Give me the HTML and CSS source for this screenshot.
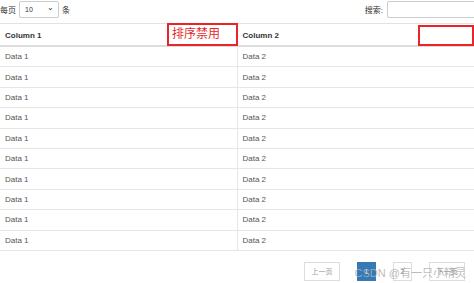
FILE: index.html
```html
<!DOCTYPE html>
<html>
<head>
  <title>DataTables</title>
  <link rel="stylesheet" href="styles.css">
</head>
<body>
  <div class="toolbar">
    <label class="length">每页
      <span class="select">10 <span class="caret">&#8964;</span></span>
      条</label>
    <label class="search">搜索:
      <span class="search-input"></span>
    </label>
  </div>

  <div class="table-wrap">
    <table class="grid">
      <thead>
        <tr><th>Column 1</th><th>Column 2</th></tr>
      </thead>
      <tbody>
        <tr><td>Data 1</td><td>Data 2</td></tr>
        <tr><td>Data 1</td><td>Data 2</td></tr>
        <tr><td>Data 1</td><td>Data 2</td></tr>
        <tr><td>Data 1</td><td>Data 2</td></tr>
        <tr><td>Data 1</td><td>Data 2</td></tr>
        <tr><td>Data 1</td><td>Data 2</td></tr>
        <tr><td>Data 1</td><td>Data 2</td></tr>
        <tr><td>Data 1</td><td>Data 2</td></tr>
        <tr><td>Data 1</td><td>Data 2</td></tr>
        <tr><td>Data 1</td><td>Data 2</td></tr>
      </tbody>
    </table>
    <!-- annotations -->
    <div class="mark mark-left">排序禁用</div>
    <div class="mark mark-right"></div>
  </div>

  <div class="pager">
    <span class="page disabled">上一页</span>
    <span class="page active">1</span>
    <span class="page num">2</span>
    <span class="page next">下一页</span>
    <div class="watermark">CSDN @有一只小精灵</div>
  </div>
</body>
</html>
```

FILE: styles.css
```css
body {
  font-family: "Liberation Sans", Arial, "Noto Sans CJK SC", sans-serif;
  font-size: 8px;
  color: #333333;
  margin: 0;
  padding: 0;
  background-color: #ffffff;
  width: 474px;
  overflow: hidden;
}
.toolbar {
  display: flex;
  justify-content: space-between;
  align-items: center;
  height: 18px;
}
.length {
  display: flex;
  align-items: center;
  gap: 3px;
}
.select {
  display: flex;
  align-items: center;
  justify-content: space-between;
  box-sizing: border-box;
  width: 40px;
  height: 17px;
  padding: 0 4px 0 5px;
  border: 1px solid #cccccc;
  border-radius: 2px;
  font-size: 7px;
}
.caret {
  font-size: 8px;
  line-height: 4px;
  margin-top: -3px;
}
.search {
  display: flex;
  align-items: center;
  gap: 4px;
}
.search-input {
  display: block;
  box-sizing: border-box;
  width: 90px;
  height: 17px;
  margin-right: -3px;
  border: 1px solid #cccccc;
  border-radius: 2px;
}
.table-wrap {
  position: relative;
  margin-top: 5px;
}
.grid {
  width: 100%;
  border-collapse: collapse;
}
.grid th {
  text-align: left;
  font-weight: bold;
  height: 20px;
  padding: 1px 5px 0;
  border-top: 1px solid #e2e2e2;
  border-bottom: 2px solid #dddddd;
}
.grid td {
  height: 19.4px;
  padding: 0 5px;
  border-bottom: 1px solid #e6e6e6;
  color: #555555;
}
.grid th + th,
.grid td + td {
  border-left: 1px solid #e6e6e6;
}
.mark {
  position: absolute;
  box-sizing: border-box;
  border: 2px solid #e8262a;
}
.mark-left {
  left: 167px;
  top: 0;
  width: 71px;
  height: 23px;
  color: #e8262a;
  font-size: 12px;
  line-height: 19px;
  padding-left: 3px;
}
.mark-right {
  left: 418px;
  top: 2px;
  width: 56px;
  height: 21px;
}
.pager {
  position: relative;
  display: flex;
  justify-content: flex-end;
  align-items: center;
  gap: 17px;
  margin-top: 11px;
  padding-right: 9px;
}
.page {
  display: flex;
  align-items: center;
  justify-content: center;
  box-sizing: border-box;
  width: 36px;
  height: 19px;
  border: 1px solid #dddddd;
  color: #777777;
  font-size: 7px;
}
.page.disabled {
  color: #999999;
}
.page.active {
  width: 19px;
  background-color: #337ab7;
  border-color: #337ab7;
  color: #ffffff;
}
.page.num {
  width: 19px;
}
.watermark {
  position: absolute;
  z-index: 1;
  right: 8px;
  top: 2px;
  font-size: 11px;
  color: rgba(175, 175, 175, 0.85);
  white-space: nowrap;
}
```
